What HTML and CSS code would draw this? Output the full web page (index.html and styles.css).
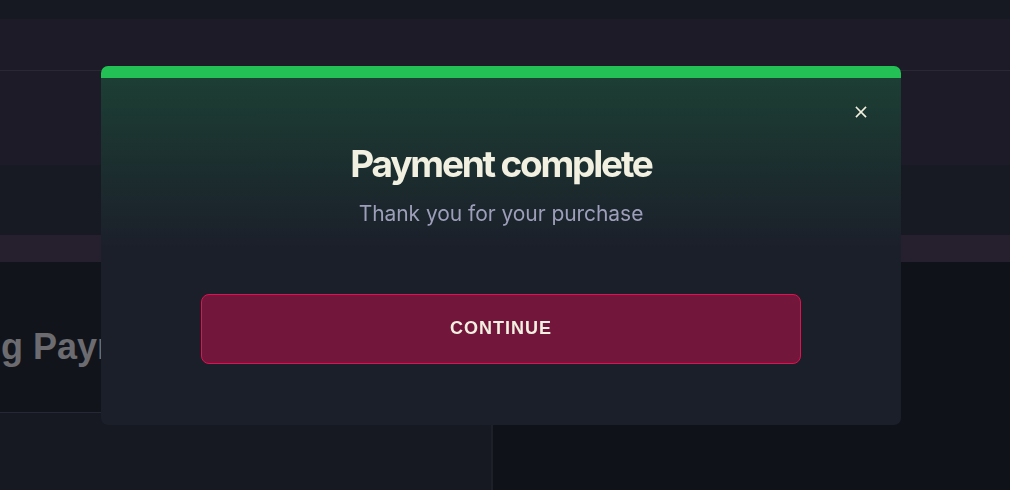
FILE: index.html
```html
<!DOCTYPE html>
<html lang="en">
<head>
<meta charset="utf-8">
<title>Payment complete</title>
<link rel="stylesheet" href="styles.css">
</head>
<body>
<div class="page">
  <div class="topbar"></div>
  <div class="nav"></div>
  <div class="hero"></div>
  <div class="strip"></div>
  <div class="banner"></div>
  <div class="main">
    <div class="left-col">
      <div class="head-block">
        <h1 class="page-title">Pending Payment</h1>
      </div>
      <div class="left-body"></div>
    </div>
    <div class="right-col"></div>
  </div>
</div>

<div class="overlay">
  <div class="modal" role="dialog" aria-labelledby="modal-title">
    <div class="modal-accent"></div>
    <div class="modal-body">
      <button class="close-btn" aria-label="Close">
        <svg width="12" height="12" viewBox="0 0 12 12" fill="none" stroke="currentColor" stroke-width="1.6" stroke-linecap="square">
          <line x1="1.5" y1="1.5" x2="10.5" y2="10.5"/>
          <line x1="10.5" y1="1.5" x2="1.5" y2="10.5"/>
        </svg>
      </button>
      <h2 class="modal-title" id="modal-title">Payment complete</h2>
      <p class="modal-sub">Thank you for your purchase</p>
      <button class="continue-btn">CONTINUE</button>
    </div>
  </div>
</div>
</body>
</html>
```

FILE: styles.css
```css
* { box-sizing: border-box; }

html, body {
  margin: 0;
  padding: 0;
  width: 1010px;
  height: 490px;
  overflow: hidden;
  background: #10121a;
  font-family: "Liberation Sans", Arial, sans-serif;
}

.page {
  display: flex;
  flex-direction: column;
  height: 490px;
}

.topbar { height: 19px; background: #161822; }
.nav { height: 52px; background: #1c1b27; border-bottom: 1px solid #292934; }
.hero { height: 94px; background: #1e1b28; }
.strip { height: 70px; background: #171923; }
.banner { height: 27px; background: #261f2d; }

.main {
  flex: 1;
  display: grid;
  grid-template-columns: 491px 1fr;
}

.left-col {
  display: flex;
  flex-direction: column;
}

.head-block {
  height: 151px;
  background: #12141c;
  border-bottom: 1px solid #262833;
  overflow: hidden;
  padding-top: 65px;
}

.page-title {
  margin: 0 0 0 -119px;
  font-size: 36px;
  font-weight: 700;
  line-height: 40px;
  color: #6c6c70;
  white-space: nowrap;
}

.left-body { flex: 1; background: #161822; }

.right-col {
  background: #10121a;
  border-left: 2px solid #1e2029;
}

/* overlay + modal */
.overlay {
  position: fixed;
  inset: 0;
  display: flex;
  align-items: center;
  justify-content: center;
  padding-right: 8px;
}

.modal {
  width: 800px;
  border-radius: 7px;
  overflow: hidden;
  background: #1b1f2a;
  display: flex;
  flex-direction: column;
}

.modal-accent {
  height: 12px;
  background: #22c055;
}

.modal-body {
  position: relative;
  display: flex;
  flex-direction: column;
  align-items: center;
  padding: 64px 100px 61px;
  background: linear-gradient(to bottom, rgba(34, 197, 94, 0.19) 0%, rgba(34, 197, 94, 0) 170px);
}

.close-btn {
  position: absolute;
  top: 27px;
  right: 33px;
  width: 14px;
  height: 14px;
  padding: 1px;
  border: 0;
  background: transparent;
  color: #f2f0e1;
  display: flex;
  align-items: center;
  justify-content: center;
  cursor: pointer;
}

.modal-title {
  margin: 0;
  font-family: Inter, "Liberation Sans", sans-serif;
  font-size: 37px;
  font-weight: 700;
  line-height: 44px;
  letter-spacing: -2.2px;
  color: #f2f0e1;
}

.modal-sub {
  margin: 14px 0 0;
  font-family: Inter, "Liberation Sans", sans-serif;
  font-size: 21px;
  line-height: 28px;
  letter-spacing: -0.05px;
  color: #9d9eb9;
}

.continue-btn {
  margin-top: 66px;
  width: 600px;
  height: 70px;
  border: 1px solid #e0124f;
  border-radius: 8px;
  background: #73163b;
  color: #f2f0e1;
  font-family: "Liberation Sans", Arial, sans-serif;
  font-size: 18px;
  font-weight: 700;
  letter-spacing: 1px;
  cursor: pointer;
}
```
